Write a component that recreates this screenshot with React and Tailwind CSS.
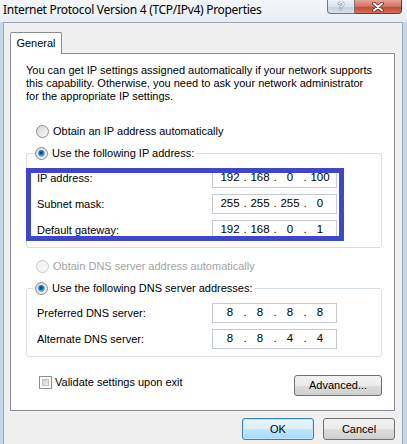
import React from "react";

const bodyFont = { fontFamily: '"Liberation Sans", Arial, sans-serif' };
const titleFont = { fontFamily: '"Noto Sans", "Open Sans", sans-serif' };

function Radio({ checked, disabled }) {
  const id = `rg${checked ? 1 : 0}${disabled ? 1 : 0}`;
  return (
    <svg width="13" height="13" viewBox="0 0 13 13" className="shrink-0">
      <defs>
        <linearGradient id={id} x1="0" y1="0" x2="1" y2="1">
          <stop offset="0" stopColor={disabled ? "#f0f0f0" : "#d4d4d4"} />
          <stop offset="1" stopColor={disabled ? "#fafafa" : "#fbfbfb"} />
        </linearGradient>
        <radialGradient id="dot" cx="0.45" cy="0.4" r="0.6">
          <stop offset="0" stopColor="#0a2c4c" />
          <stop offset="0.55" stopColor="#2b7fc0" />
          <stop offset="1" stopColor="#7fd0f4" />
        </radialGradient>
      </defs>
      <circle cx="6.5" cy="6.5" r="6" fill={`url(#${id})`} stroke={disabled ? "#c8c8c8" : "#8a8a8a"} strokeWidth="1" />
      {checked && <circle cx="6.5" cy="6.5" r="3.4" fill="url(#dot)" />}
    </svg>
  );
}

function IpBox({ parts }) {
  return (
    <div className="w-[125px] h-[20px] border border-[#c5cbd3] bg-white flex items-center pl-[6px] text-black text-[11.5px]">
      <span className="w-[22px] text-center">{parts[0]}</span>
      <span className="w-[8px] text-center">.</span>
      <span className="w-[22px] text-center">{parts[1]}</span>
      <span className="w-[8px] text-center">.</span>
      <span className="w-[22px] text-center">{parts[2]}</span>
      <span className="w-[8px] text-center">.</span>
      <span className="w-[22px] text-center">{parts[3]}</span>
    </div>
  );
}

function Row({ label, parts }) {
  return (
    <div className="flex items-center h-[20px]">
      <span className="w-[185px] pl-[10px]">{label}</span>
      <IpBox parts={parts} />
    </div>
  );
}

export default function App() {
  return (
    <div className="w-[407px] h-[444px] flex flex-col bg-[#c7d8ec] text-[11px] text-black overflow-hidden" style={bodyFont}>
      {/* title bar */}
      <div className="h-[22px] flex items-start bg-[linear-gradient(to_bottom,#f4f6f9,#e9edf2)] shrink-0">
        <div className="pl-[3px] pt-[1px] text-[12px] tracking-[-0.3px] leading-[18px] flex-1" style={titleFont}>
          Internet Protocol Version 4 (TCP/IPv4) Properties
        </div>
        <div className="flex mr-[5px]">
          <div className="w-[28px] h-[14px] border border-[#6e7886] rounded-bl-[4px] border-t-0 bg-[linear-gradient(to_bottom,#eef2f6,#dae2ea_50%,#c8d2dd_51%,#d6dee7)] flex items-center justify-center">
            <span className="text-[11px] font-bold leading-none text-white [text-shadow:0_0_1px_#3a4350,0_0_1px_#3a4350]">?</span>
          </div>
          <div className="w-[47px] h-[14px] border border-[#6e3a36] border-l-0 border-t-0 rounded-br-[4px] bg-[linear-gradient(to_bottom,#e8a698,#d7705f_50%,#c24630_51%,#d5705a)] flex items-center justify-center">
            <svg width="12" height="10" viewBox="0 0 12 10">
              <path d="M2 1.5 L10 8.5 M10 1.5 L2 8.5" stroke="#5b2420" strokeWidth="3.6" strokeLinecap="round" />
              <path d="M2 1.5 L10 8.5 M10 1.5 L2 8.5" stroke="#ffffff" strokeWidth="2" strokeLinecap="round" />
            </svg>
          </div>
        </div>
      </div>
      {/* body */}
      <div className="flex-1 flex pl-[3px] pr-[4px]">
        <div className="flex-1 bg-[#f0f0f0] border-l border-r border-t border-[#9aa6b4] flex flex-col pl-[6px] pr-[7px] pt-[8px]">
          {/* tab header */}
          <div className="flex">
            <div className="w-[52px] h-[22px] bg-white border border-b-0 border-[#898c95] rounded-t-[2px] flex items-center justify-center relative top-[1px] z-10">
              General
            </div>
          </div>
          {/* tab panel */}
          <div className="h-[358px] bg-white border border-[#898c95] flex flex-col pl-[15px] pt-[10px]">
            <p className="leading-[13px] whitespace-nowrap">
              You can get IP settings assigned automatically if your network supports
              <br />
              this capability. Otherwise, you need to ask your network administrator
              <br />
              for the appropriate IP settings.
            </p>
            <div className="flex items-center gap-[4px] ml-[10px] mt-[21px] h-[15px]">
              <Radio />
              <span>Obtain an IP address automatically</span>
            </div>
            <fieldset className="w-[356px] mt-[7px] border border-[#d5dfe5] rounded-[3px] pb-[7px]">
              <legend className="ml-[8px] pr-[2px] flex items-center gap-[4px] h-[15px]">
                <Radio checked />
                <span>Use the following IP address:</span>
              </legend>
              <div className="relative flex flex-col gap-[6px] mt-[7px]">
                <Row label="IP address:" parts={["192", "168", "0", "100"]} />
                <Row label="Subnet mask:" parts={["255", "255", "255", "0"]} />
                <Row label="Default gateway:" parts={["192", "168", "0", "1"]} />
                <div className="absolute left-[-1px] top-0 w-[318px] h-[73px] border-[5px] border-[#4046c9] pointer-events-none" />
              </div>
            </fieldset>
            <div className="flex items-center gap-[4px] ml-[10px] mt-[11px] h-[15px] text-[#a3a3a3]">
              <Radio disabled />
              <span>Obtain DNS server address automatically</span>
            </div>
            <fieldset className="w-[356px] mt-[7px] border border-[#d5dfe5] rounded-[3px] pb-[7px]">
              <legend className="ml-[8px] pr-[2px] flex items-center gap-[4px] h-[15px]">
                <Radio checked />
                <span>Use the following DNS server addresses:</span>
              </legend>
              <div className="flex flex-col gap-[6px] mt-[7px]">
                <Row label="Preferred DNS server:" parts={["8", "8", "8", "8"]} />
                <Row label="Alternate DNS server:" parts={["8", "8", "4", "4"]} />
              </div>
            </fieldset>
            <div className="flex items-start w-[356px] mt-[19px]">
              <div className="flex items-center gap-[3px] ml-[13px] flex-1 h-[13px]">
                <div className="w-[13px] h-[13px] border border-[#8f8f8f] bg-white p-[2px] shrink-0">
                  <div className="w-full h-full border border-[#c4c4c4] bg-[linear-gradient(135deg,#cbcbcb,#f2f2f2)]" />
                </div>
                <span>Validate settings upon exit</span>
              </div>
              <button className="w-[88px] h-[21px] mt-[-1px] border border-[#707070] rounded-[3px] bg-[linear-gradient(to_bottom,#f2f2f2_0%,#ebebeb_50%,#dddddd_51%,#cfcfcf_100%)] flex items-center justify-center">
                Advanced...
              </button>
            </div>
          </div>
          {/* buttons */}
          <div className="flex justify-end gap-[9px] mt-[7px]">
            <button className="w-[72px] h-[22px] border border-[#3c7fb1] rounded-[3px] bg-[linear-gradient(to_bottom,#eaf6fd_0%,#d9f0fc_50%,#bee6fd_51%,#a7d9f5_100%)] shadow-[inset_0_0_0_1px_#c0e6fb] flex items-center justify-center">
              OK
            </button>
            <button className="w-[72px] h-[22px] border border-[#707070] rounded-[3px] bg-[linear-gradient(to_bottom,#f2f2f2_0%,#ebebeb_50%,#dddddd_51%,#cfcfcf_100%)] flex items-center justify-center">
              Cancel
            </button>
          </div>
        </div>
      </div>
    </div>
  );
}
